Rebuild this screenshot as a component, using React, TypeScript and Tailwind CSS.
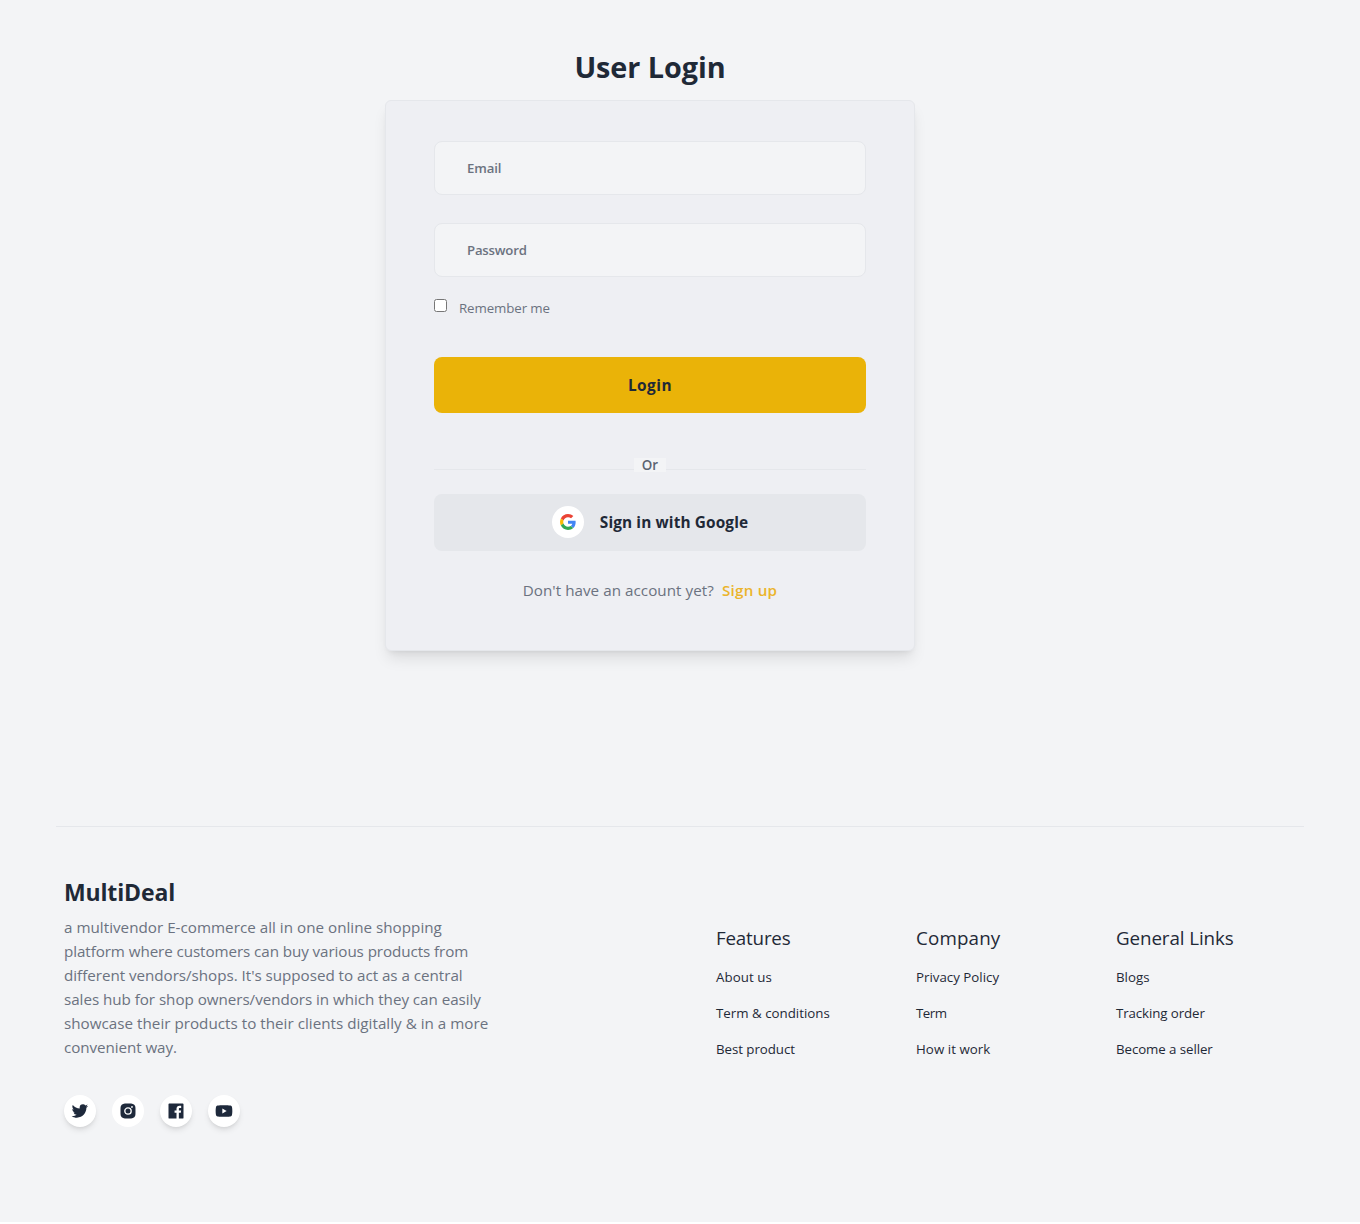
import {
  BiLogoTwitter,
  BiLogoInstagramAlt,
  BiLogoFacebookSquare,
  BiLogoYoutube,
} from "react-icons/bi";

const description = [
  { text: "a multivendor E-commerce all in one online shopping", cls: "tracking-[0.02px]" },
  { text: "platform where customers can buy various products from", cls: "tracking-[-0.08px]" },
  { text: "different vendors/shops. It's supposed to act as a central", cls: "tracking-[-0.03px]" },
  { text: "sales hub for shop owners/vendors in which they can easily", cls: "tracking-[-0.04px]" },
  { text: "showcase their products to their clients digitally & in a more", cls: "tracking-[0.02px]" },
  { text: "convenient way.", cls: "tracking-[-0.07px]" },
];

const columns = [
  {
    title: "Features",
    cls: "tracking-[-0.2px]",
    links: [
      { text: "About us", cls: "tracking-[0.08px]" },
      { text: "Term & conditions", cls: "tracking-normal" },
      { text: "Best product", cls: "tracking-[-0.05px]" },
    ],
  },
  {
    title: "Company",
    cls: "tracking-[0.15px]",
    links: [
      { text: "Privacy Policy", cls: "tracking-normal" },
      { text: "Term", cls: "tracking-[-0.5px]" },
      { text: "How it work", cls: "tracking-[0.05px]" },
    ],
  },
  {
    title: "General Links",
    cls: "tracking-[-0.1px]",
    links: [
      { text: "Blogs", cls: "tracking-normal" },
      { text: "Tracking order", cls: "tracking-[-0.1px]" },
      { text: "Become a seller", cls: "tracking-[-0.08px]" },
    ],
  },
];

const socials = [
  { name: "Twitter", Icon: BiLogoTwitter, shadow: "shadow-md" },
  { name: "Instagram", Icon: BiLogoInstagramAlt, shadow: "shadow-none" },
  { name: "Facebook", Icon: BiLogoFacebookSquare, shadow: "shadow-md" },
  { name: "YouTube", Icon: BiLogoYoutube, shadow: "shadow-md" },
];

const inputClass =
  "block h-[54px] w-full rounded-lg border border-[#e5e7eb] bg-[#f3f4f6] px-8 text-[13.2px] font-semibold placeholder-[#6b7280] focus:outline-none";

function GoogleLogo() {
  return (
    <svg viewBox="0 0 48 48" className="size-4">
      <path fill="#EA4335" d="M24 9.5c3.54 0 6.71 1.22 9.21 3.6l6.85-6.85C35.9 2.38 30.47 0 24 0 14.62 0 6.51 5.38 2.56 13.22l7.98 6.19C12.43 13.72 17.74 9.5 24 9.5z" />
      <path fill="#4285F4" d="M46.98 24.55c0-1.57-.15-3.09-.38-4.55H24v9.02h12.94c-.58 2.96-2.26 5.48-4.78 7.18l7.73 6c4.51-4.18 7.09-10.36 7.09-17.65z" />
      <path fill="#FBBC05" d="M10.53 28.59c-.48-1.45-.76-2.99-.76-4.59s.27-3.14.76-4.59l-7.98-6.19C.92 16.46 0 20.12 0 24c0 3.88.92 7.54 2.56 10.78l7.97-6.19z" />
      <path fill="#34A853" d="M24 48c6.48 0 11.93-2.13 15.89-5.81l-7.73-6c-2.15 1.45-4.92 2.3-8.16 2.3-6.26 0-11.57-4.22-13.47-9.91l-7.98 6.19C6.51 42.62 14.62 48 24 48z" />
    </svg>
  );
}

function LoginCard() {
  return (
    <div className="h-[551px] w-[530px] rounded-md border border-[#e5e7eb] bg-[#eeeff3] px-12 pt-10 shadow-[0_10px_15px_-3px_rgba(0,0,0,0.1),0_4px_6px_-4px_rgba(0,0,0,0.1)]">
      <input type="email" placeholder="Email" className={inputClass + " tracking-[-0.1px]"} />
      <input type="password" placeholder="Password" className={inputClass + " mt-7 tracking-[-0.2px]"} />
      <label className="mt-5 flex h-5 items-center">
        <input type="checkbox" className="-mt-[3px] size-[13px]" />
        <span className="ml-3 pt-0.5 text-[13.3px] leading-5 tracking-[-0.1px] text-[#6b7280]">Remember me</span>
      </label>
      <button className="mt-10 block h-14 w-full rounded-lg bg-[#eab308] pt-px text-[15.4px] font-bold tracking-[0.5px] text-[#1f2937]">
        Login
      </button>
      <div className="mt-[45px] grid h-3.5 grid-cols-[1fr_32px_1fr]">
        <div className="h-3 border-b border-[#e5e7eb]" />
        <div className="bg-[#f3f4f6] text-center text-[13.4px] leading-3.5 font-semibold text-[#5b6472]">Or</div>
        <div className="h-3 border-b border-[#e5e7eb]" />
      </div>
      <button className="mt-[22px] flex h-[57px] w-full items-center justify-center rounded-lg bg-[#e5e7eb] pb-px font-bold text-[#1f2937]">
        <span className="grid size-8 place-items-center rounded-full bg-white">
          <GoogleLogo />
        </span>
        <span className="ml-4 pt-0.5 text-[15.4px] tracking-[0.12px]">Sign in with Google</span>
      </button>
      <p className="mt-[27px] text-center text-[15.2px] leading-6 text-[#6b7280]">
        <span className="tracking-[0.05px]">Don't have an account yet?</span>
        <a href="#signup" className="ml-2 font-semibold tracking-[0.25px] text-[#ebb42a]">
          Sign up
        </a>
      </p>
    </div>
  );
}

function Footer() {
  return (
    <footer className="mx-14 mt-[175px] flex justify-between border-t border-[#e5e7eb] px-2 pt-12">
      <div>
        <h2 className="-mt-px text-[23px] leading-9 font-bold tracking-[-0.15px] text-[#1f2937]">MultiDeal</h2>
        <p className="mt-[5px] text-[15.2px] leading-6 whitespace-nowrap text-[#6b7280]">
          {description.map((line) => (
            <span key={line.text} className={"block " + line.cls}>
              {line.text}
            </span>
          ))}
        </p>
        <div className="mt-9 flex gap-4">
          {socials.map(({ name, Icon, shadow }) => (
            <a
              key={name}
              href="#social"
              aria-label={name}
              className={"grid size-8 place-items-center rounded-full bg-white text-[#1e293b] " + shadow}
            >
              <Icon className="size-5" />
            </a>
          ))}
        </div>
      </div>
      <div className="mt-12 grid w-[580px] grid-cols-[200px_200px_180px]">
        {columns.map((column) => (
          <div key={column.title} className="whitespace-nowrap text-[#1f2937]">
            <h3 className={"text-[18.8px] leading-[30px] " + column.cls}>{column.title}</h3>
            <ul className="mt-3.5 space-y-4">
              {column.links.map((link) => (
                <li key={link.text} className={"text-[13.3px] leading-5 " + link.cls}>
                  {link.text}
                </li>
              ))}
            </ul>
          </div>
        ))}
      </div>
    </footer>
  );
}

export default function App() {
  return (
    <div className="min-h-[1222px] bg-[#f3f4f6] font-['Open_Sans',sans-serif]">
      <main className="flex w-[1300px] flex-col items-center pt-[47px]">
        <h1 className="text-[28.8px] leading-10 font-bold tracking-[-0.05px] text-[#1f2937]">User Login</h1>
        <div className="mt-[13px]">
          <LoginCard />
        </div>
      </main>
      <Footer />
    </div>
  );
}
